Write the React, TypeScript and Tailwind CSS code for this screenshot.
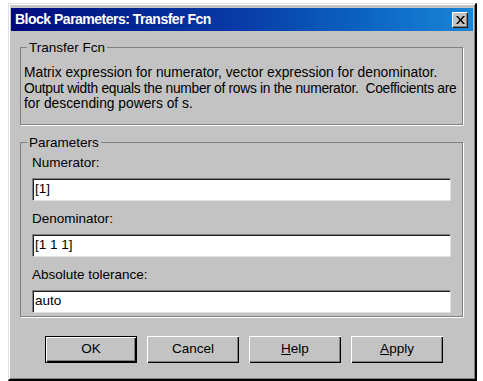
export default function App() {
  const font = { fontFamily: '"Liberation Sans", Arial, sans-serif' };
  return (
    <div className="w-[483px] h-[381px] bg-white pt-[3px] pl-[8px]" style={font}>
      <div className="flex h-[378px] w-[469px] flex-col border-t border-l border-t-[#e0e0e0] border-l-[#e0e0e0] border-r-2 border-b-2 border-r-black border-b-black bg-[#c3c3c3] pt-[4px] pl-[2px] pr-[2px] shadow-[inset_1px_1px_0_#fff,inset_-1px_-1px_0_#808080]">
        {/* title bar */}
        <div className="flex h-[23px] items-center justify-between bg-gradient-to-r from-[#00087c] via-[#0a3ba8] to-[#1a86d8] pl-[4px] pr-[5px]">
          <span className="text-[14px] font-bold tracking-[-0.5px] text-white">Block Parameters: Transfer Fcn</span>
          <div className="flex h-[16px] w-[16px] items-center justify-center border border-t-white border-l-white border-r-[#202020] border-b-[#202020] bg-[#c3c3c3] shadow-[inset_-1px_-1px_0_#808080]">
            <svg width="9" height="8" viewBox="0 0 9 8">
              <path d="M0 0h2l2.5 3 2.5-3h2L5.5 4 9 8H7L4.5 5 2 8H0l3.5-4z" fill="#000" />
            </svg>
          </div>
        </div>

        <div className="flex flex-1 flex-col pl-[9px] pr-[10px] pt-[9px] text-[13.5px] text-black">
          <fieldset className="h-[85px] min-w-0 border border-[#808080] pl-[3px] pr-[2px] shadow-[1px_1px_0_#fff]">
            <legend className="ml-[3px] px-[2px] leading-[15px]">Transfer Fcn</legend>
            <p className="mt-[10px] whitespace-nowrap text-[13.8px] leading-[15.5px]">
              Matrix expression for numerator, vector expression for denominator.
              <br />
              <span className="tracking-[-0.3px]">
                Output width equals the number of rows in the numerator.&nbsp; Coefficients are
              </span>
              <br />
              for descending powers of s.
            </p>
          </fieldset>

          <fieldset className="mt-[10px] h-[182px] min-w-0 border border-[#808080] pl-[11px] pr-[11px] shadow-[1px_1px_0_#fff]">
            <legend className="-ml-[5px] px-[2px] leading-[15px]">Parameters</legend>
            <Field label="Numerator:" value="[1]" />
            <Field label="Denominator:" value="[1 1 1]" />
            <Field label="Absolute tolerance:" value="auto" />
          </fieldset>

          <div className="mt-[19px] flex gap-[10px] pl-[25px]">
            <Btn label="OK" def />
            <Btn label="Cancel" />
            <Btn label={<><u>H</u>elp</>} />
            <Btn label={<><u>A</u>pply</>} />
          </div>
        </div>
      </div>
    </div>
  );
}

function Field({ label, value }: { label: string; value: string }) {
  return (
    <div className="flex flex-col">
      <div className="mt-[5px] h-[23px] leading-[16px]">{label}</div>
      <div className="mb-[5px] h-[23px] border border-t-[#808080] border-l-[#808080] border-r-[#e0e0e0] border-b-[#e0e0e0] bg-white pl-[2px] leading-[20px] shadow-[inset_1px_1px_0_#202020]">
        {value}
      </div>
    </div>
  );
}

function Btn({ label, def }: { label: React.ReactNode; def?: boolean }) {
  return (
    <div
      className={
        def
          ? "flex h-[27px] w-[92px] items-center justify-center border border-black bg-[#c3c3c3] shadow-[inset_1px_1px_0_#fff,inset_-1px_-1px_0_#000,inset_-2px_-2px_0_#808080]"
          : "flex h-[27px] w-[92px] items-center justify-center bg-[#c3c3c3] shadow-[inset_1px_1px_0_#fff,inset_-1px_-1px_0_#000,inset_-2px_-2px_0_#808080]"
      }
    >
      {label}
    </div>
  );
}
